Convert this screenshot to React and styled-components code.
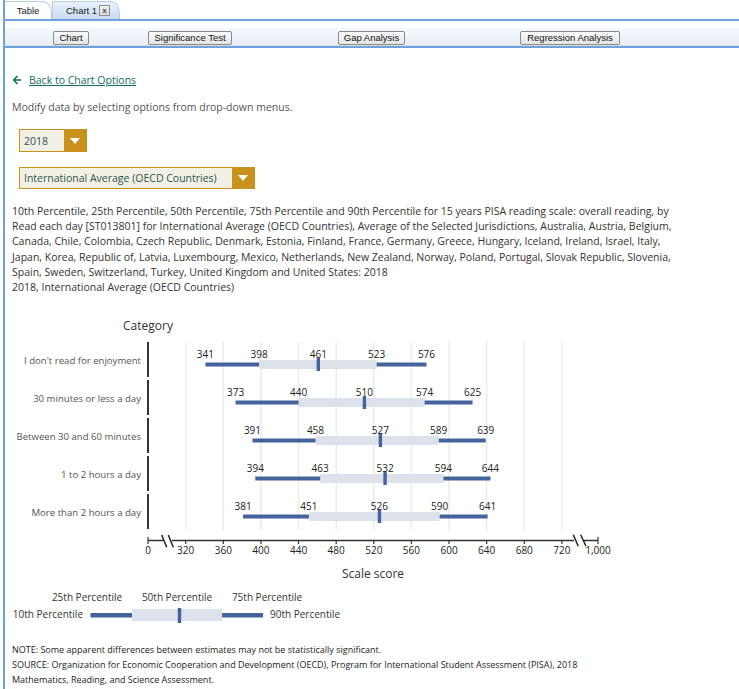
import React from 'react'
import styled, { createGlobalStyle } from 'styled-components'
import { FaArrowLeft } from 'react-icons/fa'

const GlobalStyle = createGlobalStyle`
    body {
        margin: 0;
        background: #fff;
        font-family: "Open Sans", "Liberation Sans", sans-serif;
    }
`

const rows = [
    { label: "I don't read for enjoyment", v: [341, 398, 461, 523, 576] },
    { label: '30 minutes or less a day', v: [373, 440, 510, 574, 625] },
    { label: 'Between 30 and 60 minutes', v: [391, 458, 527, 589, 639] },
    { label: '1 to 2 hours a day', v: [394, 463, 532, 594, 644] },
    { label: 'More than 2 hours a day', v: [381, 451, 526, 590, 641] },
]
const ticks = [320, 360, 400, 440, 480, 520, 560, 600, 640, 680, 720]
const sx = v => 185.7 + (v - 320) * 0.9405
const DARK = '#44639c'
const LIGHT = '#dde1ea'

const Chart = () => (
    <ChartSvg width="734" height="320" viewBox="5 310 734 320">
        <text x="148" y="331" textAnchor="middle" className="title">Category</text>
        {ticks.map(t => (
            <line key={t} x1={sx(t)} x2={sx(t)} y1="343" y2="531" stroke="#ebebeb" strokeWidth="1.5" />
        ))}
        {rows.map((r, i) => {
            const c = 365.5 + i * 38
            const top = 342 + i * 38
            const [p10, p25, p50, p75, p90] = r.v
            return (
                <g key={r.label}>
                    <line x1="148" x2="148" y1={top + 1} y2={top + 36} stroke="#333" strokeWidth="2" />
                    <text x="141" y={c - 0.5} textAnchor="end" className="cat">{r.label}</text>
                    <rect x={sx(p25)} y={c - 4.5} width={sx(p75) - sx(p25)} height="9" fill={LIGHT} />
                    <rect x={sx(p10)} y={c - 2} width={sx(p25) - sx(p10)} height="4" fill={DARK} />
                    <rect x={sx(p75)} y={c - 2} width={sx(p90) - sx(p75)} height="4" fill={DARK} />
                    <rect x={sx(p50) - 1.7} y={c - 6.5} width="3.4" height="13" fill={DARK} />
                    {r.v.map(v => (
                        <text key={v} x={sx(v)} y={c - 7} textAnchor="middle" className="val">{v}</text>
                    ))}
                </g>
            )
        })}
        <line x1="148" x2="598" y1="541.5" y2="541.5" stroke="#333" strokeWidth="1.5" />
        <line x1="148" x2="148" y1="538" y2="545" stroke="#333" strokeWidth="1.2" />
        <line x1="598" x2="598" y1="538" y2="545" stroke="#333" strokeWidth="1.2" />
        {ticks.map(t => (
            <line key={t} x1={sx(t)} x2={sx(t)} y1="541" y2="545" stroke="#333" strokeWidth="1.2" />
        ))}
        <rect x="163" y="538" width="9" height="7" fill="#fff" />
        <rect x="574" y="538" width="10" height="7" fill="#fff" />
        <path d="M161.7 536 L166.7 548.3 M168.3 536 L173.3 548.3 M573.3 535.7 L578.3 547.3 M580.7 535.7 L586 547.3" stroke="#222" strokeWidth="1.5" />
        <text x="148" y="554.5" textAnchor="middle" className="tick">0</text>
        {ticks.map(t => (
            <text key={t} x={sx(t)} y="554.5" textAnchor="middle" className="tick">{t}</text>
        ))}
        <text x="598" y="554.5" textAnchor="middle" className="tick">1,000</text>
        <text x="373" y="578.5" textAnchor="middle" className="title">Scale score</text>

        <text x="87" y="601.5" textAnchor="middle" className="legend">25th Percentile</text>
        <text x="177" y="601.5" textAnchor="middle" className="legend">50th Percentile</text>
        <text x="267" y="601.5" textAnchor="middle" className="legend">75th Percentile</text>
        <text x="83" y="618.5" textAnchor="end" className="legend">10th Percentile</text>
        <rect x="132" y="610" width="90" height="12" fill={LIGHT} />
        <rect x="90.5" y="614" width="41.5" height="4.5" fill={DARK} />
        <rect x="222" y="614" width="41" height="4.5" fill={DARK} />
        <rect x="177.8" y="609" width="3.4" height="15" fill={DARK} />
        <text x="270" y="618.5" className="legend">90th Percentile</text>
    </ChartSvg>
)

const App = () => {
    return (
        <Page>
            <GlobalStyle />
            <Frame>
                <TabStrip>
                    <Tab width={47}>Table</Tab>
                    <Tab width={68} active>
                        Chart 1
                        <CloseBox>x</CloseBox>
                    </Tab>
                </TabStrip>
                <Toolbar>
                    <ToolButton gap={48} width={36}>Chart</ToolButton>
                    <ToolButton gap={59} width={84}>Significance Test</ToolButton>
                    <ToolButton gap={106} width={67}>Gap Analysis</ToolButton>
                    <ToolButton gap={115} width={100}>Regression Analysis</ToolButton>
                </Toolbar>
                <Content>
                    <BackLink href="#"><FaArrowLeft /> <span>Back to Chart Options</span></BackLink>
                    <Hint>Modify data by selecting options from drop-down menus.</Hint>
                    <Select width={68}>
                        <span>2018</span>
                        <Caret />
                    </Select>
                    <Select width={236} second>
                        <span>International Average (OECD Countries)</span>
                        <Caret />
                    </Select>
                    <Description>
                        10th Percentile, 25th Percentile, 50th Percentile, 75th Percentile and 90th Percentile for 15 years PISA reading scale: overall reading, by Read each day [ST013801] for International Average (OECD Countries), Average of the Selected Jurisdictions, Australia, Austria, Belgium, Canada, Chile, Colombia, Czech Republic, Denmark, Estonia, Finland, France, Germany, Greece, Hungary, Iceland, Ireland, Israel, Italy, Japan, Korea, Republic of, Latvia, Luxembourg, Mexico, Netherlands, New Zealand, Norway, Poland, Portugal, Slovak Republic, Slovenia, Spain, Sweden, Switzerland, Turkey, United Kingdom and United States: 2018
                        <br />
                        2018, International Average (OECD Countries)
                    </Description>
                </Content>
                <Chart />
                <Notes>
                    <p>NOTE: Some apparent differences between estimates may not be statistically significant.</p>
                    <p>SOURCE: Organization for Economic Cooperation and Development (OECD), Program for International Student Assessment (PISA), 2018</p>
                    <p>Mathematics, Reading, and Science Assessment.</p>
                </Notes>
            </Frame>
        </Page>
    )
}

const Page = styled.div`
    padding-left: 3px;
    height: 689px;
    overflow: hidden;
`

const Frame = styled.div`
    border-left: 2px solid #6fa1dd;
    min-height: 689px;
`

const TabStrip = styled.div`
    display: flex;
    align-items: flex-end;
    height: 19px;
    border-bottom: 2px solid #6fa1dd;
`

const Tab = styled.div`
    width: ${p => p.width}px;
    height: 18px;
    box-sizing: border-box;
    display: flex;
    align-items: center;
    justify-content: ${p => (p.active ? 'space-between' : 'center')};
    padding: 0 ${p => (p.active ? '9px 0 13px' : '0')};
    font: 9.5px "Liberation Sans", Arial, sans-serif;
    color: #1a1a1a;
    background: ${p => (p.active ? 'linear-gradient(#eaf1fa, #c8daf1)' : '#fff')};
    border: 1px solid #b5cbe8;
    border-bottom: none;
    border-left: ${p => (p.active ? '1px solid #b5cbe8' : 'none')};
    border-top-right-radius: 9px 12px;
`

const CloseBox = styled.span`
    width: 9px;
    height: 9px;
    border: 1px solid #8d8d8d;
    background: linear-gradient(#f4f4f4, #d8d8d8);
    font: bold 8px/9px "Liberation Sans", Arial, sans-serif;
    text-align: center;
    color: #444;
`

const Toolbar = styled.div`
    display: flex;
    align-items: flex-start;
    margin-top: 7px;
    height: 18px;
    padding-top: 3px;
    box-sizing: border-box;
    background: linear-gradient(#f5f8fc, #e8eef6);
    border-bottom: 1px solid #d9dfe7;
    box-shadow: 0 2px 0 #6fa1dd;
`

const ToolButton = styled.button`
    margin-left: ${p => p.gap}px;
    width: ${p => p.width}px;
    height: 14px;
    padding: 0;
    font: 9.5px "Liberation Sans", Arial, sans-serif;
    line-height: 12px;
    white-space: nowrap;
    color: #111;
    background: linear-gradient(#fbfbfb, #e4e4e4);
    border: 1px solid #8a8a8a;
    border-radius: 2px;
`

const Content = styled.div`
    padding: 22px 0 0 7px;
`

const BackLink = styled.a`
    display: inline-flex;
    align-items: center;
    gap: 7px;
    font-size: 10.5px;
    line-height: 16px;
    color: #126b64;
    text-decoration: none;
    span {
        text-decoration: underline;
    }
    svg {
        font-size: 10px;
    }
`

const Hint = styled.p`
    margin: 9px 0 14px;
    font-size: 10.5px;
    line-height: 16px;
    color: #555;
`

const Select = styled.div`
    display: flex;
    align-items: center;
    justify-content: space-between;
    width: ${p => p.width}px;
    height: ${p => (p.second ? '22px' : '23px')};
    margin: 0 0 15px 7px;
    box-sizing: border-box;
    background: #f2efe5;
    border: 1px solid #c8921c;
    font-size: 10.5px;
    color: #2f5550;
    white-space: nowrap;
    span {
        padding-left: 4px;
    }
`

const Caret = styled.div`
    align-self: stretch;
    width: 22px;
    background: #c8921c;
    display: flex;
    align-items: center;
    justify-content: center;
    &::after {
        content: '';
        border-left: 5px solid transparent;
        border-right: 5px solid transparent;
        border-top: 6px solid #fff;
    }
`

const Description = styled.div`
    max-width: 664px;
    font-size: 10.5px;
    line-height: 15.2px;
    color: #333;
`

const ChartSvg = styled.svg`
    display: block;
    margin-top: 14px;
    font-family: "Open Sans", sans-serif;
    .title {
        font-size: 12px;
        fill: #333;
    }
    .cat {
        font-size: 9.6px;
        fill: #555;
    }
    .val, .tick {
        font-size: 10px;
        fill: #222;
    }
    .legend {
        font-size: 10px;
        fill: #333;
    }
`

const Notes = styled.div`
    padding: 13px 0 0 7px;
    p {
        margin: 0;
        font-size: 9px;
        line-height: 15px;
        color: #222;
    }
`

export default App
